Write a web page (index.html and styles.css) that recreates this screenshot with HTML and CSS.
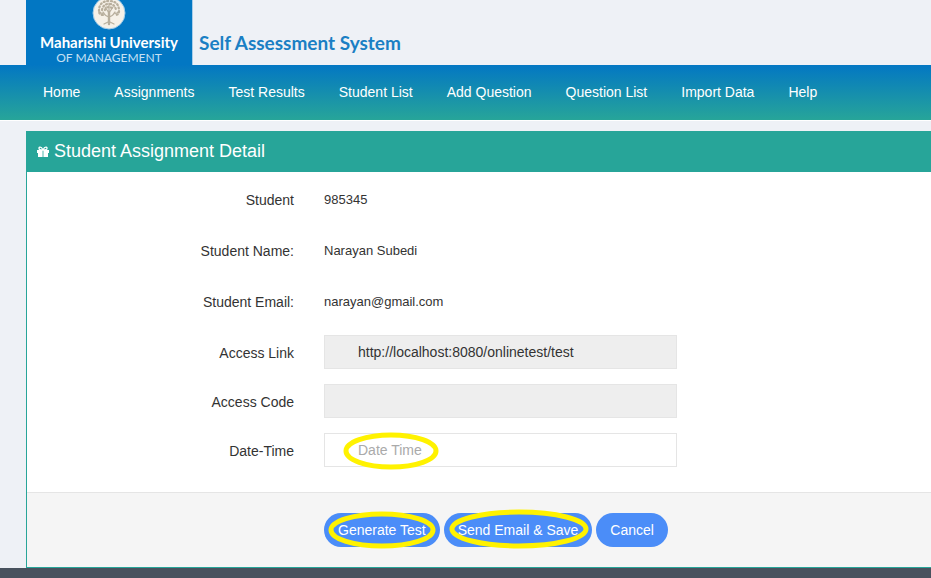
FILE: index.html
```html
<!DOCTYPE html>
<html lang="en">
<head>
<meta charset="utf-8">
<meta name="viewport" content="width=device-width, initial-scale=1">
<title>Self Assessment System</title>
<link rel="stylesheet" href="styles.css">
</head>
<body>
<header class="masthead">
  <a class="logo" href="#">
    <svg class="logo-seal" viewBox="0 0 34 34" aria-hidden="true">
      <circle cx="17" cy="17" r="16" fill="#f6f1e8" stroke="#9fcbe8"/>
      <g fill="none" stroke="#b8af9d" stroke-linecap="round">
        <path stroke-width="2.4" d="M17 28V16"/>
        <path stroke-width="1.2" d="M17 21q-4-1-6-5M17 21q4-1 6-5M17 17l-4-6M17 17l4-6M17 15V7M12 28l4-2h2l4 2M12 17q-3 1-4-1M22 17q3 1 4-1"/>
        <path stroke-width="2.2" stroke-dasharray="1 2.600" d="M7 15q0-10 10-10t10 10q0 4-4 4M11 19q-4 0-4-4M10 14q1-6 7-6t7 6M13 14q1-3 4-3t4 3"/>
      </g>
    </svg>
    <span class="logo-name">Maharishi University</span>
    <span class="logo-sub">OF MANAGEMENT</span>
  </a>
  <div class="site-title">Self Assessment System</div>
</header>
<nav class="menu">
  <a href="#">Home</a>
  <a href="#">Assignments</a>
  <a href="#">Test Results</a>
  <a href="#">Student List</a>
  <a href="#">Add Question</a>
  <a href="#">Question List</a>
  <a href="#">Import Data</a>
  <a href="#">Help</a>
</nav>
<main class="content">
  <form class="panel">
    <div class="panel-head">
      <svg class="gift" viewBox="0 0 12 12" aria-hidden="true">
        <path fill="#fff" d="M0 4h5v3H0zM7 4h5v3H7zM1 7h4v4H1zM7 7h4v4H7zM5.4 4h1.2v7H5.4z"/>
        <path fill="none" stroke="#fff" stroke-width="1.3" d="M6 4Q4.600 1 3 1.200T2.300 3.300Q3 4 6 4Q7.400 1 9 1.200T9.700 3.300Q9 4 6 4"/>
      </svg>
      <h1>Student Assignment Detail</h1>
    </div>
    <div class="fields">
      <div class="row text-row"><span class="label">Student</span><span class="value">985345</span></div>
      <div class="row text-row"><span class="label">Student Name:</span><span class="value">Narayan Subedi</span></div>
      <div class="row text-row"><span class="label">Student Email:</span><span class="value">narayan@gmail.com</span></div>
      <div class="row"><label class="label" for="link">Access Link</label><input id="link" type="text" value="http://localhost:8080/onlinetest/test" readonly></div>
      <div class="row"><label class="label" for="code">Access Code</label><input id="code" type="text" readonly></div>
      <div class="row">
        <label class="label" for="date">Date-Time</label>
        <div class="marked">
          <input id="date" type="text" placeholder="Date Time">
          <svg class="ring ring-date" viewBox="0 0 96 38" aria-hidden="true"><ellipse cx="48" cy="19" rx="45" ry="16"/></svg>
        </div>
      </div>
    </div>
    <div class="actions">
      <div class="marked">
        <button type="button">Generate Test</button>
        <svg class="ring ring-generate" viewBox="0 0 108 38" aria-hidden="true"><ellipse cx="54" cy="19" rx="51" ry="16"/></svg>
      </div>
      <div class="marked">
        <button type="button">Send Email &amp; Save</button>
        <svg class="ring ring-send" viewBox="0 0 140 40" aria-hidden="true"><ellipse cx="70" cy="20" rx="67" ry="17"/></svg>
      </div>
      <button type="button">Cancel</button>
    </div>
  </form>
</main>
<footer class="page-foot"></footer>
</body>
</html>
```
FILE: styles.css
```css
* {
  box-sizing: border-box;
}

body {
  display: flex;
  flex-direction: column;
  min-height: 100vh;
  margin: 0;
  background: #eef1f6;
  color: #333;
  font: 14px/20px "Liberation Sans", Arial, sans-serif;
}

a {
  color: inherit;
  text-decoration: none;
}

.masthead {
  display: flex;
  align-items: flex-end;
  gap: 6px;
  padding-left: 26px;
}

.logo {
  display: flex;
  flex-direction: column;
  align-items: center;
  width: 167px;
  height: 65px;
  border-right: 1px solid #a9cde8;
  background: #0277c3;
  color: #fff;
  font-family: Lato, sans-serif;
  overflow: hidden;
}

.logo-seal {
  flex: none;
  width: 34px;
  height: 34px;
  margin-top: -4px;
}

.logo-name {
  font-size: 15px;
  font-weight: 700;
  line-height: 20px;
  margin-top: 2px;
  white-space: nowrap;
}

.logo-sub {
  color: #c5e0f3;
  font-size: 12px;
  line-height: 12px;
}

.site-title {
  padding-bottom: 10px;
  color: #1a7fc4;
  font: 700 19px/24px Lato, sans-serif;
}

.menu {
  display: flex;
  padding: 17px 26px;
  border-bottom: 1px solid #fff;
  background: linear-gradient(#0377c3, #27a599);
  color: #fff;
}

.menu a {
  padding: 0 17px;
  line-height: 21px;
  white-space: nowrap;
}

.content {
  padding: 10px 0 0 26px;
}

.panel {
  border: solid #27a599;
  border-width: 0 0 1px 1px;
  background: #fff;
}

.panel-head {
  display: flex;
  align-items: center;
  gap: 5px;
  height: 41px;
  padding: 0 10px;
  background: #27a599;
  color: #fff;
}

.panel-head h1 {
  margin: 0;
  padding-bottom: 2px;
  font-size: 18px;
  font-weight: 400;
}

.gift {
  width: 12px;
  height: 12px;
}

.fields {
  padding: 10px 0;
}

.row {
  display: grid;
  grid-template-columns: 267px minmax(0, 353px);
  gap: 30px;
  align-items: center;
  min-height: 34px;
  margin-bottom: 15px;
}

.text-row {
  min-height: 36px;
}

.label {
  padding-top: 2px;
  text-align: right;
}

.text-row .label {
  padding-top: 0;
}

.value {
  font-size: 13px;
}

input {
  display: block;
  width: 100%;
  height: 34px;
  padding: 6px 33px;
  border: 1px solid #e5e5e5;
  background: #fff;
  color: #333;
  font: inherit;
}

input[readonly] {
  background: #eee;
}

input::placeholder {
  color: #aaa;
}

.actions {
  display: flex;
  gap: 4px;
  padding: 20px 0 20px 297px;
  border-top: 1px solid #e5e5e5;
  background: #f5f5f5;
}

button {
  height: 34px;
  padding: 0 14px;
  border: 0;
  border-radius: 17px;
  background: #4b8df8;
  color: #fff;
  font: inherit;
  white-space: nowrap;
}

.marked {
  position: relative;
}

.ring {
  position: absolute;
  fill: none;
  stroke: #fff200;
  stroke-width: 5px;
  pointer-events: none;
}

.ring-date {
  top: -1px;
  left: 19px;
  width: 96px;
  height: 38px;
}

.ring-generate {
  top: -2px;
  left: 4px;
  width: 108px;
  height: 38px;
}

.ring-send {
  top: -4px;
  left: 5px;
  width: 140px;
  height: 40px;
}

.page-foot {
  flex: 1;
  min-height: 10px;
  background: #48525e;
}
```
